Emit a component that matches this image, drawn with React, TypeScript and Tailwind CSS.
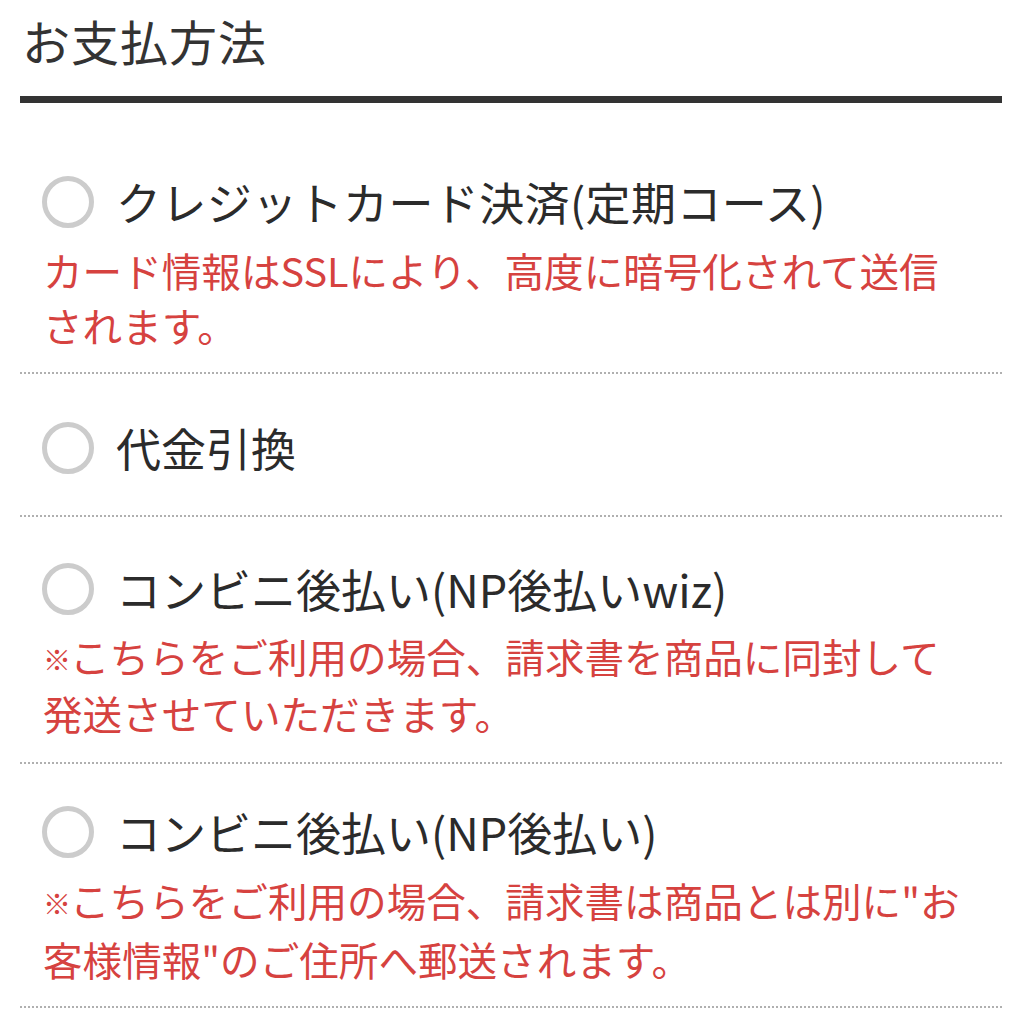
import React from "react";

const font = { fontFamily: '"Noto Sans CJK JP", "Noto Sans", sans-serif' };

function Radio() {
  return (
    <span className="inline-block w-[52px] h-[52px] rounded-full border-[5px] border-[#cccccc] bg-white shrink-0" />
  );
}

function Kome() {
  return <span className="inline-block w-[27px] text-[28px] font-bold align-[2px]">※</span>;
}

export default function App() {
  return (
    <div className="w-[1024px] h-[1024px] bg-white overflow-hidden" style={font}>
      <div className="pl-[20px] pr-[22px]">
        <h1 className="pl-[2px] pt-[10px] h-[96px] text-[48px] leading-[60px] text-[#333333] font-normal tracking-[1px]">
          お支払方法
        </h1>
        <div className="h-[7px] bg-[#333333]" />

        {/* item 1 */}
        <div className="pt-[69px] pb-[20px] border-b-2 border-dotted border-[#b0b0b0]">
          <div className="flex items-center gap-[22px] pl-[22px] h-[60px]">
            <Radio />
            <span className="text-[45px] leading-[60px] text-[#2b2b2b] whitespace-nowrap tracking-[0.4px]">
              クレジットカード決済(定期コース)
            </span>
          </div>
          <p className="mt-[10px] pl-[23px] text-[39.6px] leading-[55px] text-[#d6423f] whitespace-nowrap">
            カード情報はSSLにより、高度に暗号化されて送信
            <br />
            されます。
          </p>
        </div>

        {/* item 2 */}
        <div className="pt-[44px] pb-[37px] border-b-2 border-dotted border-[#b0b0b0]">
          <div className="flex items-center gap-[22px] pl-[22px] h-[60px]">
            <Radio />
            <span className="text-[45px] leading-[60px] text-[#2b2b2b] whitespace-nowrap">
              代金引換
            </span>
          </div>
        </div>

        {/* item 3 */}
        <div className="pt-[42px] pb-[22px] border-b-2 border-dotted border-[#b0b0b0]">
          <div className="flex items-center gap-[22px] pl-[22px] h-[60px]">
            <Radio />
            <span className="text-[45px] leading-[60px] text-[#2b2b2b] whitespace-nowrap">
              コンビニ後払い(NP後払いwiz)
            </span>
          </div>
          <p className="mt-[10px] pl-[23px] text-[39.6px] leading-[54px] text-[#d6423f] whitespace-nowrap">
            <Kome />こちらをご利用の場合、請求書を商品に同封して
            <br />
            発送させていただきます。
          </p>
        </div>

        {/* item 4 */}
        <div className="pt-[38px] pb-[20px] border-b-2 border-dotted border-[#b0b0b0]">
          <div className="flex items-center gap-[22px] pl-[22px] h-[60px]">
            <Radio />
            <span className="text-[45px] leading-[60px] text-[#2b2b2b] whitespace-nowrap">
              コンビニ後払い(NP後払い)
            </span>
          </div>
          <p className="mt-[10px] pl-[23px] text-[39.6px] leading-[55px] text-[#d6423f] whitespace-nowrap">
            <Kome />こちらをご利用の場合、請求書は商品とは別に"お
            <br />
            客様情報"のご住所へ郵送されます。
          </p>
        </div>
      </div>
    </div>
  );
}
